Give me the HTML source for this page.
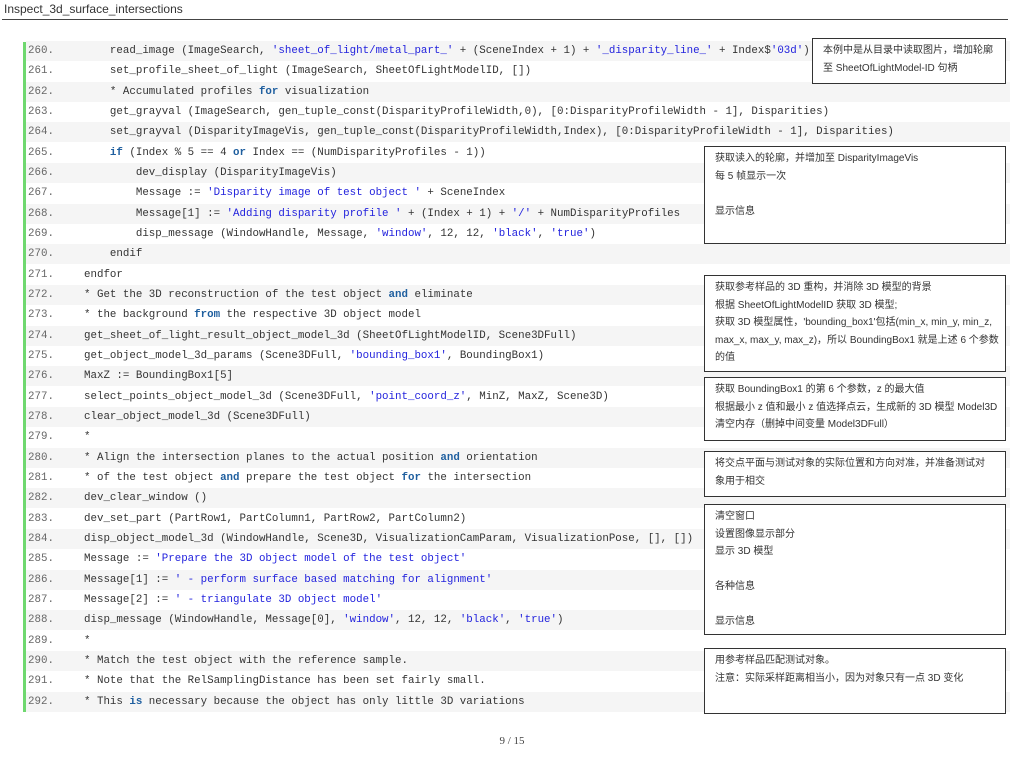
<!DOCTYPE html>
<html><head><meta charset="utf-8"><style>
body{margin:0;width:1024px;height:764px;background:#fff;position:relative;overflow:hidden;font-family:"Liberation Sans","Noto Sans CJK SC",sans-serif}
.title{position:absolute;left:4px;top:2px;font-size:12px;color:#333}
.hr{position:absolute;left:2px;top:19px;width:1006px;height:1px;background:#444}
.bar{position:absolute;left:23px;top:42px;width:3px;height:670px;background:#6fd86f}
.row{position:absolute;left:26px;width:984px;height:20px;font-family:"Liberation Mono",monospace;font-size:10.8px;line-height:20px;color:#333;white-space:pre}
.row.g{background:#f5f5f5}
.n{position:absolute;left:2px;color:#666}
.c{position:absolute;left:58px}
.s{color:#2222dd}
.k{color:#1f5f9f;font-weight:bold}
.box{position:absolute;border:1px solid #333;background:#fff;font-size:10px;color:#333;line-height:17.5px;padding:3px 10px;box-sizing:border-box;white-space:nowrap;overflow:hidden}
.pg{position:absolute;left:0;width:1024px;top:735px;text-align:center;font-family:"Liberation Serif",serif;font-size:11px;color:#444}
</style></head><body>
<div class="title">Inspect_3d_surface_intersections</div>
<div class="hr"></div>
<div class="bar"></div>

<div class="row g" style="top:41px"><span class="n">260.</span><span class="c">    read_image (ImageSearch, <span class="s">'sheet_of_light/metal_part_'</span> + (SceneIndex + 1) + <span class="s">'_disparity_line_'</span> + Index$<span class="s">'03d'</span>)</span></div>
<div class="row" style="top:61px"><span class="n">261.</span><span class="c">    set_profile_sheet_of_light (ImageSearch, SheetOfLightModelID, [])</span></div>
<div class="row g" style="top:82px"><span class="n">262.</span><span class="c">    * Accumulated profiles <span class="k">for</span> visualization</span></div>
<div class="row" style="top:102px"><span class="n">263.</span><span class="c">    get_grayval (ImageSearch, gen_tuple_const(DisparityProfileWidth,0), [0:DisparityProfileWidth - 1], Disparities)</span></div>
<div class="row g" style="top:122px"><span class="n">264.</span><span class="c">    set_grayval (DisparityImageVis, gen_tuple_const(DisparityProfileWidth,Index), [0:DisparityProfileWidth - 1], Disparities)</span></div>
<div class="row" style="top:143px"><span class="n">265.</span><span class="c">    <span class="k">if</span> (Index % 5 == 4 <span class="k">or</span> Index == (NumDisparityProfiles - 1))</span></div>
<div class="row g" style="top:163px"><span class="n">266.</span><span class="c">        dev_display (DisparityImageVis)</span></div>
<div class="row" style="top:183px"><span class="n">267.</span><span class="c">        Message := <span class="s">'Disparity image of test object '</span> + SceneIndex</span></div>
<div class="row g" style="top:204px"><span class="n">268.</span><span class="c">        Message[1] := <span class="s">'Adding disparity profile '</span> + (Index + 1) + <span class="s">'/'</span> + NumDisparityProfiles</span></div>
<div class="row" style="top:224px"><span class="n">269.</span><span class="c">        disp_message (WindowHandle, Message, <span class="s">'window'</span>, 12, 12, <span class="s">'black'</span>, <span class="s">'true'</span>)</span></div>
<div class="row g" style="top:244px"><span class="n">270.</span><span class="c">    endif</span></div>
<div class="row" style="top:265px"><span class="n">271.</span><span class="c">endfor</span></div>
<div class="row g" style="top:285px"><span class="n">272.</span><span class="c">* Get the 3D reconstruction of the test object <span class="k">and</span> eliminate</span></div>
<div class="row" style="top:305px"><span class="n">273.</span><span class="c">* the background <span class="k">from</span> the respective 3D object model</span></div>
<div class="row g" style="top:326px"><span class="n">274.</span><span class="c">get_sheet_of_light_result_object_model_3d (SheetOfLightModelID, Scene3DFull)</span></div>
<div class="row" style="top:346px"><span class="n">275.</span><span class="c">get_object_model_3d_params (Scene3DFull, <span class="s">'bounding_box1'</span>, BoundingBox1)</span></div>
<div class="row g" style="top:366px"><span class="n">276.</span><span class="c">MaxZ := BoundingBox1[5]</span></div>
<div class="row" style="top:387px"><span class="n">277.</span><span class="c">select_points_object_model_3d (Scene3DFull, <span class="s">'point_coord_z'</span>, MinZ, MaxZ, Scene3D)</span></div>
<div class="row g" style="top:407px"><span class="n">278.</span><span class="c">clear_object_model_3d (Scene3DFull)</span></div>
<div class="row" style="top:427px"><span class="n">279.</span><span class="c">*</span></div>
<div class="row g" style="top:448px"><span class="n">280.</span><span class="c">* Align the intersection planes to the actual position <span class="k">and</span> orientation</span></div>
<div class="row" style="top:468px"><span class="n">281.</span><span class="c">* of the test object <span class="k">and</span> prepare the test object <span class="k">for</span> the intersection</span></div>
<div class="row g" style="top:488px"><span class="n">282.</span><span class="c">dev_clear_window ()</span></div>
<div class="row" style="top:509px"><span class="n">283.</span><span class="c">dev_set_part (PartRow1, PartColumn1, PartRow2, PartColumn2)</span></div>
<div class="row g" style="top:529px"><span class="n">284.</span><span class="c">disp_object_model_3d (WindowHandle, Scene3D, VisualizationCamParam, VisualizationPose, [], [])</span></div>
<div class="row" style="top:549px"><span class="n">285.</span><span class="c">Message := <span class="s">'Prepare the 3D object model of the test object'</span></span></div>
<div class="row g" style="top:570px"><span class="n">286.</span><span class="c">Message[1] := <span class="s">' - perform surface based matching for alignment'</span></span></div>
<div class="row" style="top:590px"><span class="n">287.</span><span class="c">Message[2] := <span class="s">' - triangulate 3D object model'</span></span></div>
<div class="row g" style="top:610px"><span class="n">288.</span><span class="c">disp_message (WindowHandle, Message[0], <span class="s">'window'</span>, 12, 12, <span class="s">'black'</span>, <span class="s">'true'</span>)</span></div>
<div class="row" style="top:631px"><span class="n">289.</span><span class="c">*</span></div>
<div class="row g" style="top:651px"><span class="n">290.</span><span class="c">* Match the test object with the reference sample.</span></div>
<div class="row" style="top:671px"><span class="n">291.</span><span class="c">* Note that the RelSamplingDistance has been set fairly small.</span></div>
<div class="row g" style="top:692px"><span class="n">292.</span><span class="c">* This <span class="k">is</span> necessary because the object has only little 3D variations</span></div>

<div class="box" style="left:812px;top:38px;width:194px;height:46px">本例中是从目录中读取图片，增加轮廓<br>至 SheetOfLightModel-ID 句柄</div>
<div class="box" style="left:704px;top:146px;width:302px;height:98px">获取读入的轮廓，并增加至 DisparityImageVis<br>每 5 帧显示一次<br><br>显示信息</div>
<div class="box" style="left:704px;top:275px;width:302px;height:97px">获取参考样品的 3D 重构，并消除 3D 模型的背景<br>根据 SheetOfLightModelID 获取 3D 模型;<br>获取 3D 模型属性，'bounding_box1'包括(min_x, min_y, min_z,<br>max_x, max_y, max_z)，所以 BoundingBox1 就是上述 6 个参数<br>的值</div>
<div class="box" style="left:704px;top:377px;width:302px;height:64px">获取 BoundingBox1 的第 6 个参数，z 的最大值<br>根据最小 z 值和最小 z 值选择点云，生成新的 3D 模型 Model3D<br>清空内存（删掉中间变量 Model3DFull）</div>
<div class="box" style="left:704px;top:451px;width:302px;height:46px">将交点平面与测试对象的实际位置和方向对准，并准备测试对<br>象用于相交</div>
<div class="box" style="left:704px;top:504px;width:302px;height:131px">清空窗口<br>设置图像显示部分<br>显示 3D 模型<br><br>各种信息<br><br>显示信息</div>
<div class="box" style="left:704px;top:648px;width:302px;height:66px">用参考样品匹配测试对象。<br>注意：实际采样距离相当小，因为对象只有一点 3D 变化</div>

<div class="pg">9 / 15</div>
</body></html>
